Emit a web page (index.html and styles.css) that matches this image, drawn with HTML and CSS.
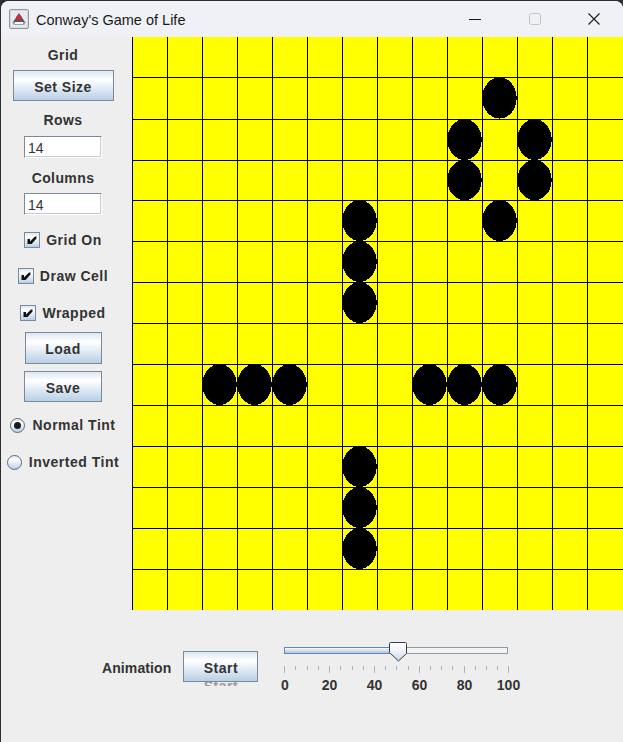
FILE: index.html
```html
<!DOCTYPE html>
<html>
<head>
<meta charset="utf-8">
<title>Conway's Game of Life</title>
<link rel="stylesheet" href="styles.css">
</head>
<body>
<div class="window">
  <header class="titlebar">
    <svg class="app-icon" width="20" height="20" viewBox="0 0 20 20">
      <rect x="0.5" y="0.5" width="19" height="19" rx="1.5" fill="#d5dae2" stroke="#8f969f"/>
      <rect x="2" y="2" width="16" height="16" fill="#e6e9ee"/>
      <polygon points="10,4 16,13 4,13" fill="#55585e"/>
      <polygon points="3,13 17,13 15,16 5,16" fill="#9aa0a8"/>
      <rect x="6" y="13" width="8" height="2" fill="#f4f4f4"/>
      <circle cx="10" cy="8.5" r="2.6" fill="#e3262e"/>
    </svg>
    <span class="title">Conway's Game of Life</span>
    <div class="controls">
      <span class="ctl ctl-min">
        <svg width="12" height="12" viewBox="0 0 12 12"><path d="M0 6.5H12" stroke="#1a1a1a" stroke-width="1"/></svg>
      </span>
      <span class="ctl">
        <svg width="12" height="12" viewBox="0 0 12 12"><rect x="0.5" y="0.5" width="11" height="11" rx="2" fill="none" stroke="#c4c4c4"/></svg>
      </span>
      <span class="ctl ctl-close">
        <svg width="12" height="12" viewBox="0 0 12 12"><path d="M0.5 0.5L11.5 11.5M11.5 0.5L0.5 11.5" stroke="#1a1a1a" stroke-width="1.1"/></svg>
      </span>
    </div>
  </header>

  <div class="content">
    <aside class="sidebar">
      <div class="label lbl-grid">Grid</div>
      <button class="btn btn-setsize">Set Size</button>
      <div class="label lbl-rows">Rows</div>
      <input class="field field-rows" type="text" value="14">
      <div class="label lbl-cols">Columns</div>
      <input class="field field-cols" type="text" value="14">

      <div class="opt opt-gridon">
        <span class="cbox"><svg width="14" height="14" viewBox="0 0 14 14"><polygon points="2.5,6 5,6 5,8.5 10,3.5 11.5,3.5 11.5,5.5 6.5,11 2.5,11" fill="#111"/></svg></span>
        <span class="opt-text">Grid On</span>
      </div>
      <div class="opt opt-drawcell">
        <span class="cbox"><svg width="14" height="14" viewBox="0 0 14 14"><polygon points="2.5,6 5,6 5,8.5 10,3.5 11.5,3.5 11.5,5.5 6.5,11 2.5,11" fill="#111"/></svg></span>
        <span class="opt-text">Draw Cell</span>
      </div>
      <div class="opt opt-wrapped">
        <span class="cbox"><svg width="14" height="14" viewBox="0 0 14 14"><polygon points="2.5,6 5,6 5,8.5 10,3.5 11.5,3.5 11.5,5.5 6.5,11 2.5,11" fill="#111"/></svg></span>
        <span class="opt-text">Wrapped</span>
      </div>

      <button class="btn btn-load">Load</button>
      <button class="btn btn-save">Save</button>

      <div class="opt radio-opt opt-normal">
        <span class="radio selected"></span>
        <span class="opt-text">Normal Tint</span>
      </div>
      <div class="opt radio-opt opt-inverted">
        <span class="radio"></span>
        <span class="opt-text">Inverted Tint</span>
      </div>
    </aside>

    <svg class="board" width="491" height="573" viewBox="0 0 491 573" shape-rendering="crispEdges">
      <rect x="0" y="0" width="491" height="573" fill="#ffff00"/>
      <path stroke="#000" stroke-width="1" fill="none"
        d="M0.5 0V573M35.5 0V573M70.5 0V573M105.5 0V573M140.5 0V573M175.5 0V573M210.5 0V573M245.5 0V573M280.5 0V573M315.5 0V573M350.5 0V573M385.5 0V573M420.5 0V573M455.5 0V573
           M0 40.5H491M0 82.5H491M0 123.5H491M0 163.5H491M0 204.5H491M0 245.5H491M0 286.5H491M0 327.5H491M0 368.5H491M0 409.5H491M0 450.5H491M0 491.5H491M0 532.5H491"/>
      <g fill="#000">
        <ellipse cx="367.5" cy="61" rx="17.2" ry="20.6"/>
        <ellipse cx="332.5" cy="102.5" rx="17.2" ry="20.4"/>
        <ellipse cx="402.5" cy="102.5" rx="17.2" ry="20.4"/>
        <ellipse cx="332.5" cy="143" rx="17.2" ry="20.2"/>
        <ellipse cx="402.5" cy="143" rx="17.2" ry="20.2"/>
        <ellipse cx="227.5" cy="183.5" rx="17.2" ry="20.4"/>
        <ellipse cx="367.5" cy="183.5" rx="17.2" ry="20.4"/>
        <ellipse cx="227.5" cy="224.5" rx="17.2" ry="20.4"/>
        <ellipse cx="227.5" cy="265.5" rx="17.2" ry="20.4"/>
        <ellipse cx="87.5" cy="347.5" rx="17.2" ry="20.4"/>
        <ellipse cx="122.5" cy="347.5" rx="17.2" ry="20.4"/>
        <ellipse cx="157.5" cy="347.5" rx="17.2" ry="20.4"/>
        <ellipse cx="297.5" cy="347.5" rx="17.2" ry="20.4"/>
        <ellipse cx="332.5" cy="347.5" rx="17.2" ry="20.4"/>
        <ellipse cx="367.5" cy="347.5" rx="17.2" ry="20.4"/>
        <ellipse cx="227.5" cy="429.5" rx="17.2" ry="20.4"/>
        <ellipse cx="227.5" cy="470.5" rx="17.2" ry="20.4"/>
        <ellipse cx="227.5" cy="511.5" rx="17.2" ry="20.4"/>
      </g>
    </svg>
  </div>

  <div class="bottom">
    <div class="label anim-label">Animation</div>
    <button class="btn btn-start">Start</button>
    <svg class="slider" width="245" height="56" viewBox="0 0 245 56">
      <defs>
        <linearGradient id="trackOn" x1="0" y1="0" x2="0" y2="1">
          <stop offset="0" stop-color="#ffffff"/>
          <stop offset="0.4" stop-color="#dce7f2"/>
          <stop offset="1" stop-color="#a9bed6"/>
        </linearGradient>
        <linearGradient id="thumbFill" x1="0" y1="0" x2="0" y2="1">
          <stop offset="0" stop-color="#ffffff"/>
          <stop offset="0.5" stop-color="#eef3f9"/>
          <stop offset="1" stop-color="#c2d4e8"/>
        </linearGradient>
      </defs>
      <rect x="4.5" y="7.5" width="223" height="6" fill="#f3f3f3" stroke="#8e99a5"/>
      <rect x="4.5" y="7.5" width="112" height="6" fill="url(#trackOn)" stroke="#6384c0"/>
      <path d="M110.5 2.5H125.5Q126.5 2.5 126.5 3.5V13.5L118.5 21L110.5 13.5Q109.5 13.5 109.5 12.5V3.5Q109.5 2.5 110.5 2.5Z" fill="url(#thumbFill)" stroke="#3a3f46"/>
      <path stroke="#9fb2c6" stroke-width="1" shape-rendering="crispEdges"
        d="M4.5 26V33M15.5 26V30M27.5 26V30M38.5 26V30M49.5 26V33M60.5 26V30M72.5 26V30M83.5 26V30M94.5 26V33M105.5 26V30M116.5 26V30M128.5 26V30M139.5 26V33M150.5 26V30M161.5 26V30M172.5 26V30M184.5 26V33M195.5 26V30M206.5 26V30M217.5 26V30M228.5 26V33"/>
      <g class="tick-labels">
        <text x="5" y="50">0</text>
        <text x="49.5" y="50">20</text>
        <text x="94.5" y="50">40</text>
        <text x="139.5" y="50">60</text>
        <text x="184.5" y="50">80</text>
        <text x="228.5" y="50">100</text>
      </g>
    </svg>
  </div>
</div>
</body>
</html>
```
FILE: styles.css
```css
* {
  box-sizing: border-box;
}

html,
body {
  margin: 0;
  padding: 0;
}

body {
  width: 623px;
  height: 742px;
  overflow: hidden;
  background: #2c2e33;
  font-family: "Liberation Sans", Arial, sans-serif;
}

.window {
  margin: 1px 0 0 1px;
  width: 622px;
  height: 741px;
  background: #eeeeee;
  border-radius: 8px 8px 0 0;
  overflow: hidden;
  display: flex;
  flex-direction: column;
}

/* ---------- title bar ---------- */
.titlebar {
  flex: none;
  height: 36px;
  background: #eff1f6;
  display: flex;
  align-items: center;
}

.app-icon {
  display: block;
  margin-left: 8px;
  flex: none;
}

.title {
  margin-left: 7px;
  font-size: 14.5px;
  color: #1a1a1a;
  line-height: 18px;
  padding-top: 1px;
}

.controls {
  margin-left: auto;
  display: flex;
  height: 100%;
}

.ctl {
  width: 58px;
  height: 100%;
  display: flex;
  align-items: center;
  justify-content: center;
}

.ctl svg {
  display: block;
}

.ctl-min {
  padding-right: 4px;
}

.ctl-close {
  width: 59px;
}

/* ---------- main ---------- */
.content {
  flex: none;
  height: 573px;
  display: flex;
  gap: 7px;
}

.sidebar {
  width: 124px;
  flex: none;
  display: flex;
  flex-direction: column;
  align-items: center;
  padding-top: 10px;
}

.label {
  font-size: 14px;
  font-weight: bold;
  line-height: 16px;
  color: #333333;
  letter-spacing: 0.4px;
}

.btn {
  position: relative;
  display: block;
  margin: 0;
  padding: 2px 0 0 0;
  font-family: "Liberation Sans", Arial, sans-serif;
  font-size: 14px;
  font-weight: bold;
  letter-spacing: 0.5px;
  color: #333333;
  border: 1px solid #7a8a99;
  border-radius: 0;
  background: linear-gradient(to bottom, #dde8f3 0%, #ffffff 30%, #e6eef7 55%, #b8cfe5 100%);
  text-align: center;
}

.btn-setsize {
  margin-top: 7px;
  width: 101px;
  height: 31px;
}

.lbl-rows {
  margin-top: 11px;
}

.field {
  display: block;
  width: 78px;
  height: 22px;
  margin: 0;
  padding: 2px 0 0 3px;
  font-family: "Liberation Sans", Arial, sans-serif;
  font-size: 14px;
  color: #333333;
  background: #ffffff;
  border: 1px solid #7a8a99;
  border-right-color: #ffffff;
  border-bottom-color: #ffffff;
  box-shadow: inset -1px -1px 0 #c4ccd4;
  outline: none;
}

.field-rows {
  margin-top: 8px;
}

.lbl-cols {
  margin-top: 12px;
}

.field-cols {
  margin-top: 7px;
}

.opt {
  display: flex;
  align-items: center;
  gap: 6px;
  height: 17px;
}

.opt-text {
  font-size: 14px;
  font-weight: bold;
  line-height: 16px;
  letter-spacing: 0.5px;
  color: #333333;
}

.cbox {
  flex: none;
  width: 16px;
  height: 16px;
  border: 1px solid #7a8a99;
  background: linear-gradient(to bottom, #dde8f3 0%, #ffffff 30%, #e6eef7 55%, #b8cfe5 100%);
}

.cbox svg {
  display: block;
}

.opt-gridon {
  margin-top: 16px;
}

.opt-drawcell {
  margin-top: 19px;
}

.opt-wrapped {
  margin-top: 20px;
}

.btn-load {
  margin-top: 11px;
  width: 77px;
  height: 32px;
}

.btn-save {
  margin-top: 7px;
  width: 78px;
  height: 31px;
}

.radio-opt {
  gap: 7px;
  height: 16px;
}

.radio {
  flex: none;
  position: relative;
  width: 15px;
  height: 15px;
  border-radius: 50%;
  border: 1px solid #5f6c7a;
  background: linear-gradient(to bottom, #dde8f3 0%, #ffffff 30%, #e6eef7 55%, #b8cfe5 100%);
}

.radio.selected::after {
  content: "";
  position: absolute;
  left: 3px;
  top: 3px;
  width: 7px;
  height: 7px;
  border-radius: 50%;
  background: #1c1c1c;
}

.opt-normal {
  margin-top: 15px;
}

.opt-inverted {
  margin-top: 21px;
}

.board {
  display: block;
  flex: none;
}

/* ---------- bottom ---------- */
.bottom {
  flex: 1;
  display: flex;
  align-items: flex-start;
  padding: 30px 0 0 101px;
}

.anim-label {
  margin-top: 20px;
  letter-spacing: 0.1px;
}

.btn-start {
  margin-top: 11px;
  margin-left: 12px;
  width: 75px;
  height: 31px;
}

/* faint repaint remnant of the label just below the Start button */
.btn-start::after {
  content: "Start";
  position: absolute;
  left: 0;
  right: 0;
  top: 30px;
  height: 4px;
  overflow: hidden;
  line-height: 8px;
  color: #9a9a9a;
  text-align: center;
}

.slider {
  display: block;
  margin-left: 22px;
  flex: none;
}

.tick-labels text {
  font-family: "Liberation Sans", Arial, sans-serif;
  font-size: 14px;
  font-weight: bold;
  fill: #333333;
  text-anchor: middle;
}
```
